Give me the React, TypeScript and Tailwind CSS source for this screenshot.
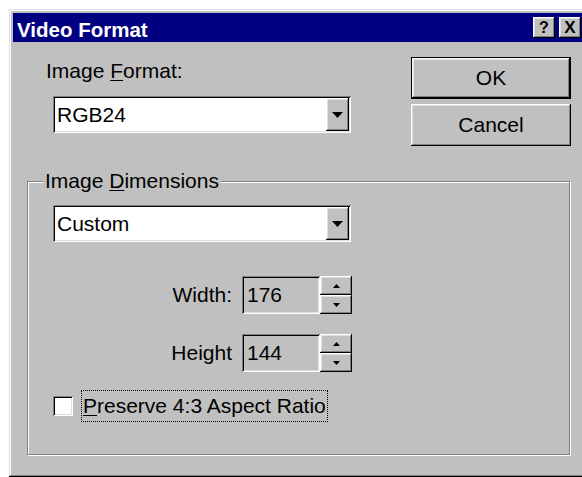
import React from 'react';

// classic 3D bevels
const raised =
  'shadow-[inset_-1px_-1px_0_#000,inset_1px_1px_0_#fff,inset_-2px_-2px_0_#808080,inset_2px_2px_0_#dfdfdf]';
const sunken =
  'shadow-[inset_1px_1px_0_#808080,inset_-1px_-1px_0_#fff,inset_2px_2px_0_#000,inset_-2px_-2px_0_#dfdfdf]';

const ArrowDown: React.FC<{ w: number; h: number }> = ({ w, h }) => (
  <svg width={w} height={h} viewBox={`0 0 ${w} ${h}`}>
    <polygon points={`0,0 ${w},0 ${w / 2},${h}`} fill="#000" />
  </svg>
);

const ArrowUp: React.FC<{ w: number; h: number }> = ({ w, h }) => (
  <svg width={w} height={h} viewBox={`0 0 ${w} ${h}`}>
    <polygon points={`0,${h} ${w},${h} ${w / 2},0`} fill="#000" />
  </svg>
);

const Combo: React.FC<{ value: string; className?: string }> = ({ value, className }) => (
  <div className={`flex w-[298px] h-[37px] bg-white p-[2px] ${sunken} ${className ?? ''}`}>
    <div className="flex-1 flex items-center pl-[2px]">{value}</div>
    <div className={`w-[23px] h-full bg-[#c0c0c0] flex items-center justify-center ${raised}`}>
      <ArrowDown w={11} h={6} />
    </div>
  </div>
);

const SpinField: React.FC<{ label: string; value: string; className?: string }> = ({ label, value, className }) => (
  <div className={`flex items-center h-[38px] ${className ?? ''}`}>
    <span className="w-[204px] text-right">{label}</span>
    <div className={`ml-[10px] w-[78px] h-full flex items-center pl-[5px] ${sunken}`}>{value}</div>
    <div className="w-[32px] h-full flex flex-col">
      <div className={`flex-1 flex items-center justify-center ${raised}`}>
        <ArrowUp w={7} h={4} />
      </div>
      <div className={`flex-1 flex items-center justify-center ${raised}`}>
        <ArrowDown w={7} h={4} />
      </div>
    </div>
  </div>
);

export default function App() {
  return (
    <div className="w-[582px] h-[477px] overflow-hidden bg-white pl-[9px] pt-[9px] font-['Liberation_Sans',Arial,sans-serif] text-[21px] leading-[24px] text-black">
      <div className="w-[578px] h-[468px] bg-[#c0c0c0] p-[4px] pb-0 flex flex-col shadow-[inset_-1px_-1px_0_#000,inset_1px_1px_0_#dfdfdf,inset_-2px_-2px_0_#808080,inset_2px_2px_0_#fff]">
        {/* title bar */}
        <div className="h-[29px] shrink-0 bg-[#000080] flex justify-between pl-[4px] pr-[2px]">
          <span className="text-white font-bold text-[20.5px] leading-[23px] pt-[5px]">Video Format</span>
          <div className="flex items-center gap-[4px]">
            <div className={`w-[22px] h-[21px] bg-[#c0c0c0] flex items-center justify-center font-bold text-[16px] leading-none ${raised}`}>
              ?
            </div>
            <div className={`w-[22px] h-[21px] bg-[#c0c0c0] flex items-center justify-center font-bold text-[17px] leading-none ${raised}`}>
              X
            </div>
          </div>
        </div>

        {/* body */}
        <div className="flex-1 flex flex-col">
          <div className="flex h-[104px]">
            <div className="flex flex-col pt-[17px]">
              <span className="pl-[33px]">
                Image <span className="underline decoration-1 underline-offset-2">F</span>ormat:
              </span>
              <Combo value="RGB24" className="ml-[40px] mt-[13px]" />
            </div>
            <div className="ml-[60px] pt-[15px] flex flex-col gap-[5px]">
              <button className={`w-[160px] h-[42px] border border-black bg-[#c0c0c0] ${raised}`}>OK</button>
              <button className={`w-[160px] h-[42px] bg-[#c0c0c0] ${raised}`}>Cancel</button>
            </div>
          </div>

          {/* Image Dimensions group */}
          <div className="relative ml-[14px] mt-[35px] w-[543px] h-[274px] border border-[#808080] shadow-[inset_1px_1px_0_#fff,1px_1px_0_#fff] flex flex-col">
            <span className="absolute left-[15px] top-[-13px] px-[2px] bg-[#c0c0c0]">
              Image <span className="underline decoration-1 underline-offset-2">D</span>imensions
            </span>
            <Combo value="Custom" className="ml-[25px] mt-[23px]" />
            <SpinField label="Width:" value="176" className="mt-[34px]" />
            <SpinField label="Height" value="144" className="mt-[20px]" />
            <div className="flex items-center ml-[25px] mt-[18px]">
              <div className={`w-[20px] h-[20px] bg-white ${sunken}`} />
              <span className="ml-[8px] border border-dotted border-black px-[1px] py-[3px]">
                <span className="underline decoration-1 underline-offset-2">P</span>reserve 4:3 Aspect Ratio
              </span>
            </div>
          </div>
        </div>
      </div>
    </div>
  );
}
